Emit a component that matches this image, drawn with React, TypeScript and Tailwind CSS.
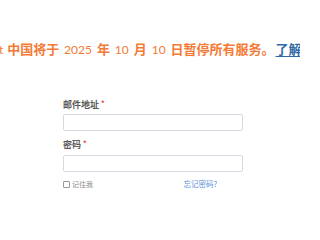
import React from 'react';

const cjk = "font-['Noto_Sans_CJK_SC','Noto_Sans',sans-serif]";

const Num = ({ children }: { children: React.ReactNode }) => (
  <span className="font-['Lato','Noto_Sans',sans-serif] text-[12px] font-normal">{children}</span>
);

export default function App() {
  return (
    <div className={`w-[300px] h-[200px] overflow-hidden bg-white ${cjk}`}>
      {/* notice banner */}
      <div className="mt-[41px] -ml-[7px] whitespace-nowrap text-[13px] leading-[16px] font-bold text-[#f47a36] [word-spacing:2px]">
        <span className="mr-[-1px] font-['Lato',sans-serif] font-normal text-[12px]">at</span> 中国将于 <Num>2025</Num> 年 <Num>10</Num> 月 <Num>10</Num> 日暂停所有服务。
        <a href="#" className="ml-[1px] text-[#2f6aa6] underline underline-offset-2">了解更多</a>
      </div>

      {/* login form */}
      <form className="ml-[63px] mt-[41px] w-[180px]">
        <label className="flex items-start text-[9px] leading-[12px] font-bold text-[#5a5a5a]">
          邮件地址<span className="ml-[2px] text-[7px] leading-[8px] text-[#e33]">*</span>
        </label>
        <input className="mt-[3px] block h-[17px] w-full rounded-[2px] border border-[#d3dae2] bg-white" />

        <label className="mt-[8px] flex items-start text-[9px] leading-[12px] font-bold text-[#5a5a5a]">
          密码<span className="ml-[2px] text-[7px] leading-[8px] text-[#e33]">*</span>
        </label>
        <input type="password" className="mt-[4px] block h-[17px] w-full rounded-[2px] border border-[#d3dae2] bg-white" />

        <div className="mt-[7px] flex items-center justify-between text-[7px] leading-[10px]">
          <label className="flex items-center text-[#888]">
            <span className="mr-[2px] inline-block h-[7px] w-[7px] rounded-[1px] border border-[#999] bg-white" />
            记住我
          </label>
          <a href="#" className="mr-[26px] text-[7.5px] text-[#5a8fd8]">忘记密码?</a>
        </div>
      </form>
    </div>
  );
}
